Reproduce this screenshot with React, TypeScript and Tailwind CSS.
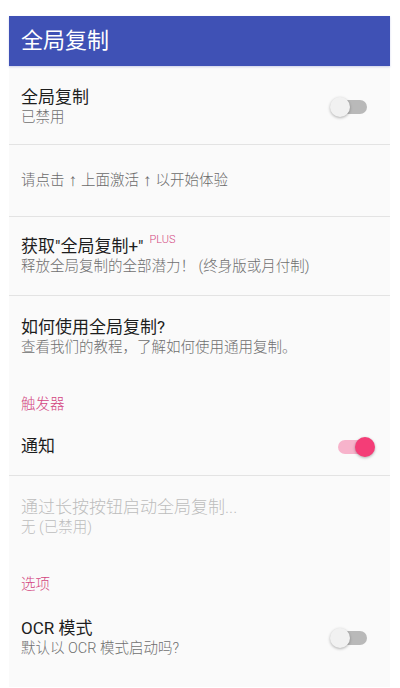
const font = 'Roboto, "Noto Sans CJK SC", "Noto Sans", sans-serif';

function Switch({ on }: { on: boolean }) {
  return (
    <div className="relative h-[22px] w-[40px] shrink-0">
      <div
        className={
          'absolute left-[3px] right-[3px] top-[4px] h-[14px] rounded-full ' +
          (on ? 'bg-[#f7b3cb]' : 'bg-[#b9b9b9]')
        }
      />
      <div
        className={
          'absolute top-[1px] h-[20px] w-[20px] rounded-full shadow-[0_1px_3px_rgba(0,0,0,0.3)] ' +
          (on ? 'right-0 bg-[#f43d77]' : 'left-0 bg-[#f1f1f1]')
        }
      />
    </div>
  );
}

function Divider() {
  return <div className="h-px bg-[#e3e3e3]" />;
}

function SectionHeader({ label }: { label: string }) {
  return (
    <div className="px-3 pb-[3px] pt-[17px] text-[14.5px] font-light leading-5 text-[#d3467f]">{label}</div>
  );
}

function Arrow() {
  return (
    <span className="mx-[4px] text-[17px] leading-none" style={{ fontFamily: '"Liberation Sans", sans-serif' }}>
      ↑
    </span>
  );
}

export default function App() {
  return (
    <div className="min-h-[688px] bg-white pl-[9px] pr-[10px] pt-4" style={{ fontFamily: font }}>
      <div className="bg-[#fafafa] pb-3">
        {/* app bar */}
        <div className="flex h-[50px] items-center bg-[#3f51b5] px-3 shadow-[0_1px_2px_rgba(63,81,181,0.25)]">
          <span className="text-[22px] leading-none text-white">全局复制</span>
        </div>

        {/* master switch */}
        <div className="flex items-center pl-3 pr-5 pb-[16px] pt-[20px]">
          <div className="flex-1">
            <div className="text-[17px] leading-[22px] text-[#1d1d1d]">全局复制</div>
            <div className="text-[14.5px] font-light leading-5 text-[#6f6f6f]">已禁用</div>
          </div>
          <Switch on={false} />
        </div>
        <Divider />

        <div className="flex h-[71px] items-center px-3 text-[14.5px] font-light text-[#6a6a6a]">
          请点击<Arrow />上面激活<Arrow />以开始体验
        </div>
        <Divider />

        <div className="px-3 pb-[18px] pt-[18px]">
          <div className="flex items-start text-[17px] leading-[22px] text-[#1d1d1d]">
            <span>获取"全局复制+"</span>
            <span className="ml-[6px] -mt-[3px] text-[11px] font-light leading-4 text-[#d3467f]">PLUS</span>
          </div>
          <div className="text-[14.5px] font-light leading-5 text-[#6f6f6f]">释放全局复制的全部潜力！ (终身版或月付制)</div>
        </div>
        <Divider />

        <div className="px-3 pb-[20px] pt-[20px]">
          <div className="text-[17px] leading-[22px] text-[#1d1d1d]">如何使用全局复制?</div>
          <div className="text-[14.5px] font-light leading-5 text-[#6f6f6f]">查看我们的教程，了解如何使用通用复制。</div>
        </div>

        <SectionHeader label="触发器" />
        <div className="flex h-[57px] items-center pl-3 pr-[15px]">
          <div className="flex-1 text-[17px] text-[#1d1d1d]">通知</div>
          <Switch on={true} />
        </div>
        <Divider />

        <div className="px-3 pb-[20px] pt-[20px]">
          <div className="text-[17px] font-light leading-[22px] text-[#bdbdbd]">通过长按按钮启动全局复制...</div>
          <div className="text-[14.5px] font-light leading-5 text-[#bdbdbd]">无 (已禁用)</div>
        </div>

        <SectionHeader label="选项" />
        <div className="flex items-center pl-3 pr-5 pb-4 pt-[19px]">
          <div className="flex-1">
            <div className="text-[17px] leading-[22px] text-[#1d1d1d]">OCR 模式</div>
            <div className="text-[14.5px] font-light leading-5 text-[#6f6f6f]">默认以 OCR 模式启动吗?</div>
          </div>
          <Switch on={false} />
        </div>
      </div>
    </div>
  );
}
